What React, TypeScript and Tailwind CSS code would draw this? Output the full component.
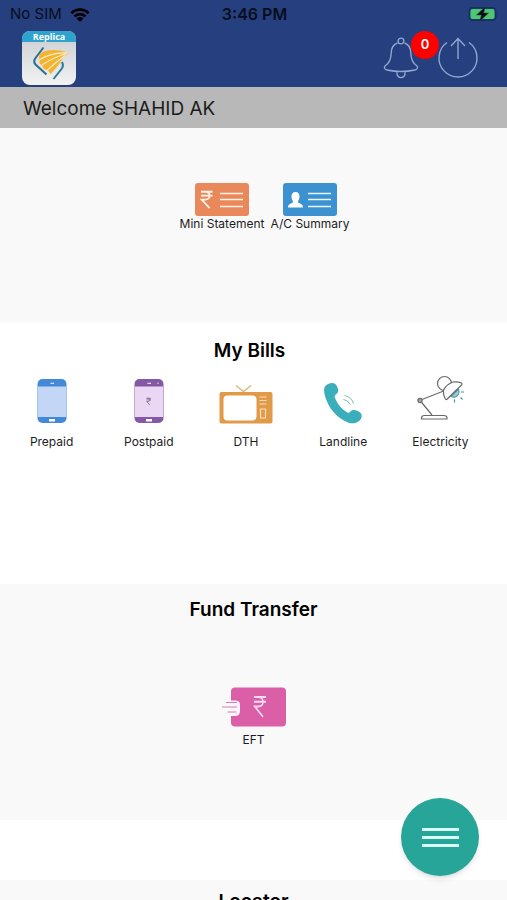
import type { ReactNode } from "react";

const RUPEE = "M0 1H16M0 6H16M1 1H6C14 1 14 11 6 11H1L12 22";

function WifiIcon() {
  return (
    <svg viewBox="0 0 20 15" className="h-[15px] w-5" aria-hidden="true">
      <path d="M0.4 5.2a13.6 13.6 0 0 1 19.2 0l-2 2a10.8 10.8 0 0 0-15.2 0z" />
      <path d="M3.5 8.4a9.2 9.2 0 0 1 13 0l-2 2a6.4 6.4 0 0 0-9 0z" />
      <path d="M6.6 11.5a4.8 4.8 0 0 1 6.8 0L10 14.9z" />
    </svg>
  );
}

function BatteryIcon() {
  return (
    <svg viewBox="0 0 31 18" className="h-[18px] w-[31px]" aria-hidden="true">
      <rect
        x="1.2"
        y="2.7"
        width="26.6"
        height="12.6"
        rx="3.5"
        fill="none"
        stroke="#1a2d5e"
        strokeWidth="1.4"
      />
      <path d="M29.3 6.8q1.7 2.2 0 4.4z" fill="#1a2d5e" />
      <rect x="2.5" y="4" width="24" height="10" rx="2" fill="#4cc870" />
      <path
        d="M17.5 1.5L8.5 10h5l-2 6.5 9-8.5h-5z"
        fill="#05080f"
        stroke="#1c4a48"
        strokeWidth="0.6"
      />
    </svg>
  );
}

function Logo() {
  return (
    <div className="h-[54px] w-[54px] overflow-hidden rounded-lg bg-linear-to-b from-[#c9ccd0] to-[#f2f2f2]">
      <div className="h-[11px] bg-[#2fa3cd] text-center font-['Open_Sans',sans-serif] text-[9px] leading-[11px] font-bold text-white">
        Replica
      </div>
      <svg viewBox="0 0 54 43" className="h-[43px] w-[54px]" aria-hidden="true">
        <path
          d="M21.500 5.500L13.500 16q-2.500 3.500 0 6.500l11 10"
          fill="none"
          stroke="#2a6f90"
          strokeWidth="2"
        />
        <path
          d="M31.500 37l8-10q2.500-3 .5-7"
          fill="none"
          stroke="#2a7ba0"
          strokeWidth="2"
        />
        <path
          d="M18 12C24 7 36 7 47 11 42 13.500 41 16 38 21L29 32Q27 30 26 28.500 20 27 20 23 16 22 18 18 16 15 18 12Z"
          fill="#f6b32e"
        />
        <path
          d="M18 17.500Q30 10 46 11M20 23Q32 15 45 11.500M25 28.500Q34 20 43 13.500"
          fill="none"
          stroke="#f7ecd2"
          strokeWidth="1.2"
        />
      </svg>
    </div>
  );
}

function BellIcon() {
  return (
    <svg
      viewBox="0 0 36 42"
      className="h-[42px] w-9"
      fill="none"
      stroke="#8ea8d2"
      strokeWidth="1.4"
      aria-hidden="true"
    >
      <circle cx="18" cy="4" r="2.9" />
      <path d="M14.5 6C9.5 7.5 8.400 11 8.200 16 8 23 6.500 26 2.500 28.500 .5 30 1.500 32.500 4 33q14 3 28 0c2.500-.5 3.500-3 1.500-4.500C29.500 26 28 23 27.800 16 27.600 11 26.500 7.500 21.500 6" />
      <path d="M14 35.2c-1 7.200 9 7.200 8 0" />
    </svg>
  );
}

function PowerIcon() {
  return (
    <svg
      viewBox="0 0 42 42"
      className="h-[42px] w-[42px]"
      fill="none"
      stroke="#8ea8d2"
      strokeWidth="1.4"
      aria-hidden="true"
    >
      <path d="M10 5.500a19 19 0 1 0 22 0M21 22V1.500M14 9l7-7.500L28 9" />
    </svg>
  );
}

function StatementIcon() {
  return (
    <svg viewBox="0 0 54 34" className="h-[34px] w-[54px]" aria-hidden="true">
      <rect y="1" width="54" height="33" rx="3" fill="#e9885a" />
      <g fill="none" stroke="#fff3ea">
        <path
          d={RUPEE}
          transform="translate(6 9) scale(.72 .78)"
          strokeWidth="2.4"
        />
        <path d="M25 11.500h23M25 17.500h23M25 24.500h23" strokeWidth="1.5" />
      </g>
    </svg>
  );
}

function SummaryIcon() {
  return (
    <svg viewBox="0 0 54 34" className="h-[34px] w-[54px]" aria-hidden="true">
      <rect y="1" width="54" height="33" rx="3" fill="#3c92d0" />
      <path
        d="M12.500 10c3 0 4.200 2 4 5-.2 2.500-1.500 3.500-1.500 5 0 1.500 5 1.200 5 5.500H5c0-4.300 5-4 5-5.500 0-1.500-1.300-2.500-1.500-5-.2-3 1-5 4-5z"
        fill="#fff"
      />
      <path
        d="M25 11.500h23M25 17.500h23M25 24.500h23"
        stroke="#eaf5fd"
        strokeWidth="1.5"
      />
    </svg>
  );
}

function PhoneIcon(props: { frame: string; screen: string; rupee?: boolean }) {
  const { frame, screen, rupee } = props;
  return (
    <svg viewBox="0 0 30 46" className="h-[46px] w-[30px]" aria-hidden="true">
      <rect x=".5" y="1" width="29" height="44" rx="5" fill={frame} />
      <path d="M1 8.500h28V39H1z" fill={screen} />
      <path d="M12 41h6v2.400h-6zM13.500 4.800h3.500v1h-3.500z" fill="#fff" />
      {rupee ? (
        <>
          <circle cx="24" cy="5.3" r=".8" fill="#e6cdf0" />
          <path
            d={RUPEE}
            transform="translate(12.5 20) scale(.28 .32)"
            fill="none"
            stroke="#8a6a98"
            strokeWidth="3"
          />
        </>
      ) : null}
    </svg>
  );
}

function TvIcon() {
  return (
    <svg viewBox="0 0 54 40" className="h-10 w-[54px]" aria-hidden="true">
      <path
        d="M17 1.500l7.500 6 7.500-6"
        fill="none"
        stroke="#e2b277"
        strokeWidth="1.4"
      />
      <rect x=".5" y="8" width="53" height="31.500" rx="2" fill="#e09a48" />
      <rect x="4.500" y="11.500" width="33" height="25" rx="4" fill="#fff" />
      <path
        d="M40.500 13h7M40.500 16.500h7M40.500 20h7M41.500 25h5v9h-5z"
        fill="none"
        stroke="#f9dfbf"
        strokeWidth="1.2"
      />
    </svg>
  );
}

function LandlineIcon() {
  return (
    <svg viewBox="0 0 40 42" className="h-[42px] w-10" aria-hidden="true">
      <path
        d="M2 4.500C5 1 11-.5 13.500 3.500c2 3.500 2.500 7-.5 9-1.500 1-1.500 2-1 3.500 2.500 6 6 10.500 11.500 14 1.500 1 2.500 1 4-.5 2.500-2.500 6-1.500 9 .5 3.500 2.500 2.500 6.500-.5 9-3 2.500-7 3-11 1.500C14 36 5.500 26.500 2 14 1 10.500.5 7 2 4.500z"
        fill="#3aaebb"
      />
      <path
        d="M20.500 17.500q4.500.5 6.500 5M21.500 13.500q7 1.500 9 8"
        fill="none"
        stroke="#75bda9"
        strokeWidth="1"
      />
    </svg>
  );
}

function LampIcon() {
  return (
    <svg
      viewBox="0 0 50 48"
      className="h-12 w-[50px] overflow-visible"
      fill="none"
      stroke="#696969"
      strokeWidth="1.2"
      strokeLinejoin="round"
      aria-hidden="true"
    >
      <circle cx="29.500" cy="7.500" r="7" />
      <path
        d="M36 20.500l7.500-7.500q1.500 5-1.500 7-3 2-6 .5z"
        fill="#9ccbd5"
        stroke="#589eaa"
      />
      <path
        d="M28.300 14.700Q31 8.500 38 6q5-.5 8.500 1 1 .8 0 2L32.500 22.800q-1.500 1.500-2.300 0-2-4-1.900-8.100z"
        fill="#fff"
      />
      <path d="M28 15.300L7 23.500M6.700 26.500L17 39" />
      <circle cx="5" cy="24.500" r="2.100" fill="#aaa" />
      <path d="M6.500 43v-1.200q0-2.300 3-2.300h19.500q3 0 3 2.300V43z" />
      <path d="M46 16h3M45.500 21.500l2 2M39.500 23.500v3" stroke="#4796a5" />
    </svg>
  );
}

function EftIcon() {
  return (
    <svg viewBox="0 0 66 40" className="h-10 w-[66px]" aria-hidden="true">
      <rect x="10" y=".5" width="55" height="39" rx="4" fill="#db5fa6" />
      <path d="M9 13.500h5q5 0 5 4v6.500q0 5-5 5H9z" fill="#fdf3fa" />
      <path
        d="M5 15.500h11M1 20h15M6.500 25h9"
        fill="none"
        stroke="#d77eb4"
        strokeWidth="1.2"
      />
      <path
        d={RUPEE}
        transform="translate(33 9) scale(.75 .95)"
        fill="none"
        stroke="#fbdcf0"
        strokeWidth="2"
      />
    </svg>
  );
}

function Tile(props: { label: string; gap: string; children: ReactNode }) {
  return (
    <button
      type="button"
      className={`flex flex-col items-center text-xs leading-4 whitespace-nowrap ${props.gap}`}
    >
      {props.children}
      <span>{props.label}</span>
    </button>
  );
}

function Heading(props: { children: ReactNode }) {
  return (
    <h2 className="text-center text-[19px] leading-7 font-semibold text-black">
      {props.children}
    </h2>
  );
}

const bills = [
  { label: "Prepaid", icon: <PhoneIcon frame="#4389d8" screen="#c3d6f5" /> },
  {
    label: "Postpaid",
    icon: <PhoneIcon frame="#8657a4" screen="#ead7f4" rupee />,
  },
  { label: "DTH", icon: <TvIcon /> },
  { label: "Landline", icon: <LandlineIcon /> },
  { label: "Electricity", icon: <LampIcon /> },
];

export default function App() {
  return (
    <div className="flex h-screen flex-col overflow-hidden bg-white font-['Inter',sans-serif] text-[#1c1c1c]">
      <header className="shrink-0 bg-[#263f7f]">
        <div className="grid h-7 grid-cols-3 items-center pr-2 pl-[10px] text-[15px] leading-5 text-[#080d1c]">
          <div className="flex items-center gap-2">
            <span>No SIM</span>
            <WifiIcon />
          </div>
          <span className="text-center text-base leading-5 font-semibold">
            3:46 PM
          </span>
          <span className="flex justify-end">
            <BatteryIcon />
          </span>
        </div>
        <div className="flex h-[59px] items-center justify-between pr-7 pl-[22px]">
          <Logo />
          <div className="flex items-center gap-[18px]">
            <button
              type="button"
              aria-label="Notifications"
              className="relative"
            >
              <BellIcon />
              <span className="absolute -top-[6px] left-7 flex h-7 w-7 items-center justify-center rounded-full bg-[#fe0000] text-[13px] font-semibold text-white">
                0
              </span>
            </button>
            <button type="button" aria-label="Log out">
              <PowerIcon />
            </button>
          </div>
        </div>
      </header>

      <div className="shrink-0 bg-[#b8b8b8] px-[23px] pt-2 pb-[5px] text-[19px] leading-7">
        Welcome SHAHID AK
      </div>

      <main className="min-h-0 flex-1 overflow-hidden">
        <section className="flex h-[195px] items-start justify-center gap-[6px] bg-[#f9f9f9] pt-[54px] pl-[22px]">
          <Tile label="Mini Statement" gap="gap-0">
            <StatementIcon />
          </Tile>
          <Tile label="A/C Summary" gap="gap-0">
            <SummaryIcon />
          </Tile>
        </section>

        <section className="h-[261px] bg-white pt-[14px] pr-2">
          <Heading>My Bills</Heading>
          <div className="mt-[11px] grid grid-cols-5 items-end pr-[10px] pl-[3px]">
            {bills.map((bill) => (
              <Tile key={bill.label} label={bill.label} gap="gap-[10px]">
                {bill.icon}
              </Tile>
            ))}
          </div>
        </section>

        <section className="h-[236px] bg-[#f9f9f9] pt-3">
          <Heading>Fund Transfer</Heading>
          <div className="mt-[63px] flex justify-center">
            <Tile label="EFT" gap="gap-[5px]">
              <EftIcon />
            </Tile>
          </div>
        </section>

        <section className="mt-[60px] h-[236px] bg-[#f9f9f9] pt-2">
          <Heading>Locator</Heading>
        </section>
      </main>

      <button
        type="button"
        aria-label="Open menu"
        className="fixed right-7 bottom-6 flex h-[78px] w-[78px] flex-col items-center justify-center gap-[5px] rounded-full bg-[#28a599] shadow-md"
      >
        <span className="h-[3px] w-[37px] bg-[#d9fbf6]" />
        <span className="h-[3px] w-[37px] bg-[#d9fbf6]" />
        <span className="h-[3px] w-[37px] bg-[#d9fbf6]" />
      </button>
    </div>
  );
}
